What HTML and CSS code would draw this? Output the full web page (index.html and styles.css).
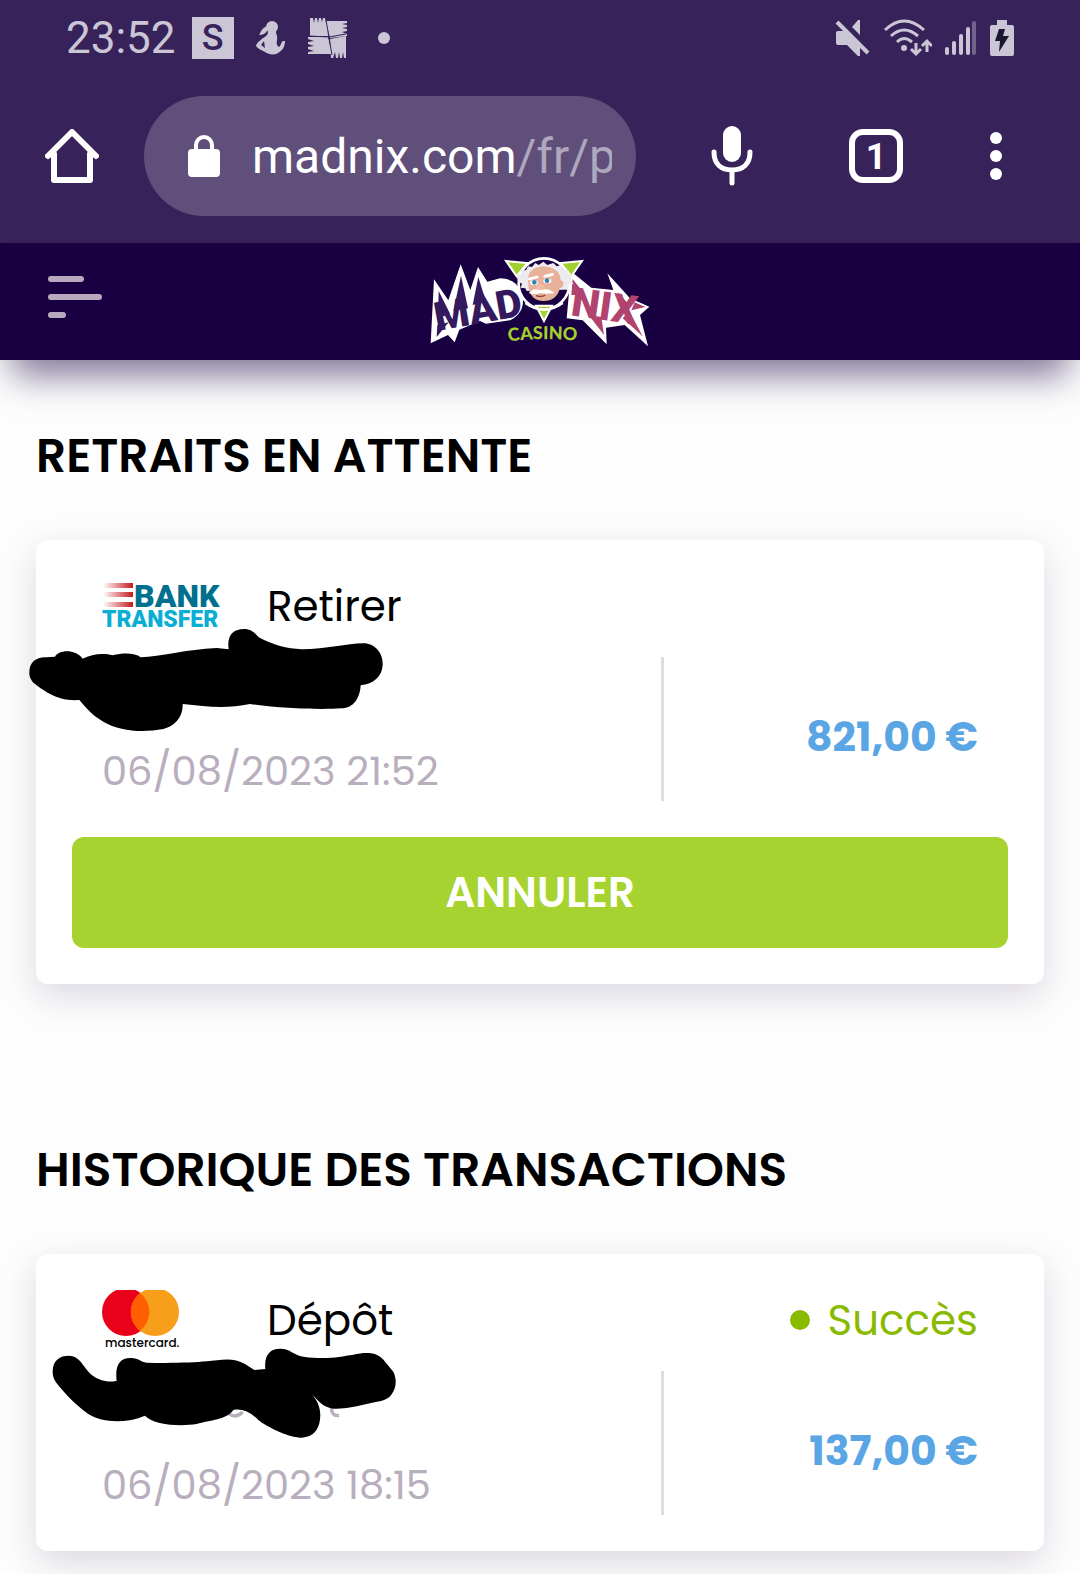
FILE: index.html
```
<!DOCTYPE html>
<html lang="fr">
<head>
    <meta charset="UTF-8">
    <meta name="viewport" content="width=device-width, initial-scale=1.0">
    <title>Madnix - Transactions</title>
    <link rel="stylesheet" href="styles.css">
</head>
<body>
    <div class="status-bar">
        <div class="status-left">
            <span class="clock">23:52</span>
            <span class="app-badge">S</span>
            <svg class="icon-figure" width="30" height="34" viewBox="0 0 30 34" fill="#cbc6d6">
                <circle cx="16" cy="6" r="6"/>
                <path d="M12 5 C6 6 5 11 3 14 C6 14 9 13 11 10 Z"/>
                <path d="M12 9 H20 C19 12 22 14 21 19 C20 22 21 25 23 26 C25 25 25 21 27 20 H29 C29 27 25 31 20 33 C16 34 12 33 9 31 C6 29 2 28 0 25 C0 22 7 17 10 15 C12 13 12 12 12 9 Z"/>
                <path d="M8 20 L5 24 L9 27 Z" fill="#38225a"/>
            </svg>
            <svg class="icon-scarf" width="40" height="40" viewBox="0 0 40 40" fill="#cbc6d6">
                <path d="M2 0 H5 L6 5 L7 0 H9 L10 5 L11 0 H13 L14 4 L15 0 H17 L18 5 L19 2 L21 18 H2 Z"/>
                <path d="M18 3 H39 V5 L34 6 L39 7 V9 L34 10 L39 11 V13 L34 14 L39 16 V18 L22 20 Z"/>
                <path d="M0 19 H20 L24 36 H0 V34 L6 33 L0 31 V29 L6 28 L0 26 V24 L6 23 L0 21 Z"/>
                <path d="M22 21 L38 18 V40 H36 L35 34 L34 40 H32 L31 34 L30 40 H28 L27 34 L25 40 H23 Z"/>
                <path d="M18 2 L24 37 M1 18 L21 19 L38 16" stroke="#38225a" fill="none"/>
            </svg>
            <svg width="12" height="12" viewBox="0 0 12 12" fill="#cbc6d6"><circle cx="6" cy="6" r="6"/></svg>
        </div>
        <div class="status-right">
            <svg width="36" height="38" viewBox="0 0 36 38" fill="#cbc6d6">
                <path d="M3 12 H9 L25 28 V37 H23 L12 26 H3 Q1 26 1 24 V14 Q1 12 3 12 Z"/>
                <path d="M17 8 L23 1 H25 V16 Z"/>
                <path d="M2 3 L33 34" stroke="#cbc6d6" stroke-width="4"/>
            </svg>
            <svg width="48" height="38" viewBox="0 0 48 38" fill="none" stroke="#cbc6d6" stroke-width="3">
                <path d="M1 11 Q20 -7 40 11"/>
                <path d="M7 17 Q20 5 34 17"/>
                <path d="M13 23 Q20 16 28 23"/>
                <circle cx="20" cy="29" r="3" fill="#cbc6d6" stroke="none"/>
                <path d="M32 24 V35 M27 30 L32 35 L37 30 M43 33 V22 M38 27 L43 22 L48 27"/>
            </svg>
            <svg width="32" height="36" viewBox="0 0 32 36" fill="#cbc6d6">
                <rect x="0" y="27" width="4" height="8" rx="2"/>
                <rect x="7" y="21" width="4" height="14" rx="2"/>
                <rect x="14" y="14" width="4" height="21" rx="2"/>
                <rect x="21" y="7" width="4" height="28" rx="2"/>
                <rect x="27" y="1" width="4" height="34" rx="2" opacity=".4"/>
            </svg>
            <svg width="24" height="36" viewBox="0 0 24 36">
                <path d="M7 0 H17 V5 H22 Q24 5 24 7 V34 Q24 36 22 36 H2 Q0 36 0 34 V7 Q0 5 2 5 H7 Z" fill="#cbc6d6"/>
                <path d="M9 9 H15 L13 16 H19 L9 32 L10 21 H5 Z" fill="#1c1730"/>
            </svg>
        </div>
    </div>

    <div class="toolbar">
        <button class="tool home" aria-label="Accueil">
            <svg width="54" height="54" viewBox="0 0 54 54" fill="none" stroke="#fff" stroke-width="6" stroke-linecap="round" stroke-linejoin="round">
                <path d="M9 25 V51 H45 V25"/>
                <path d="M3 27 L27 3 L51 27"/>
            </svg>
        </button>
        <a class="address" href="#">
            <svg class="lock" width="32" height="42" viewBox="0 0 32 42">
                <rect x="0" y="14" width="32" height="28" rx="4" fill="#fff"/>
                <path d="M8 16 V10 A8 8 0 0 1 24 10 V16" fill="none" stroke="#fff" stroke-width="4"/>
            </svg>
            <span class="url">madnix.com<span class="path">/fr/p</span></span>
        </a>
        <button class="tool" aria-label="Recherche vocale">
            <svg width="42" height="60" viewBox="0 0 42 60">
                <rect x="12" y="0" width="18" height="36" rx="9" fill="#fff"/>
                <path d="M3 26 C3 38 10 44 21 44 C32 44 39 38 39 26 M21 44 V57" fill="none" stroke="#fff" stroke-width="5" stroke-linecap="round"/>
            </svg>
        </button>
        <button class="tool" aria-label="Onglets"><span class="tab-count">1</span></button>
        <button class="tool more" aria-label="Menu">
            <svg width="12" height="48" viewBox="0 0 12 48" fill="#fff">
                <circle cx="6" cy="6" r="6"/><circle cx="6" cy="24" r="6"/><circle cx="6" cy="42" r="6"/>
            </svg>
        </button>
    </div>

    <header class="site-header">
        <button class="menu" aria-label="Menu du site">
            <svg width="54" height="42" viewBox="0 0 54 42" fill="#b8a9bf">
                <rect y="0" width="36" height="6" rx="3"/>
                <rect y="18" width="54" height="6" rx="3"/>
                <rect y="36" width="18" height="6" rx="3"/>
            </svg>
        </button>
        <a class="brand" href="#" aria-label="Madnix Casino">
            <svg width="220" height="94" viewBox="90 60 660 282">
                <!-- white plates behind the two words -->
                <path fill="#fff" d="M92 325 L102 133 L145 196 L182 88 L211 165 L234 96 L262 140 L300 130 Q350 130 366 175 Q380 230 330 256 L258 266 L240 258 L178 284 L164 322 L144 300 Z"/>
                <path fill="#fff" d="M500 250 L512 118 L524 118 L574 158 L640 165 L622 115 L690 190 L748 215 L720 240 L744 334 L674 270 L618 278 L620 328 L548 256 Z"/>
                <!-- spikes on the letters -->
                <path fill="#34195f" d="M116 168 L150 236 L114 250 Z M183 122 L204 220 L160 228 Z M235 126 L258 200 L218 210 Z M112 270 L146 262 L110 306 Z"/>
                <path fill="#b0446f" d="M518 132 L556 180 L514 180 Z M566 240 L604 246 L612 300 Z M688 228 L728 304 L668 250 Z M654 172 L690 212 L668 226 Z M694 226 L736 216 L704 202 Z"/>
                <text class="word-mad" x="110" y="288" transform="rotate(-10 110 288)">MAD</text>
                <text class="word-nix" x="510" y="241" transform="rotate(8 510 241)">NIX</text>
                <!-- emblem -->
                <circle cx="432" cy="146" r="76" fill="#180042" stroke="#fff" stroke-width="8"/>
                <path d="M318 78 L382 84 L350 124 Z M546 78 L482 84 L514 124 Z M408 212 L456 212 L432 258 Z" fill="#a4d02f" stroke="#fff" stroke-width="6"/>
                <path d="M376 204 Q432 244 488 204" fill="none" stroke="#fff" stroke-width="8"/>
                <path d="M350 122 L366 118 L362 106 L378 106 L384 94 L396 96 L406 84 L416 90 L430 80 L442 90 L460 84 L470 94 L484 90 L490 104 L506 104 L504 116 L520 122 L510 132 L520 146 L506 150 L506 164 L488 164 L380 168 L376 160 L362 158 L366 146 L354 140 Z" fill="#edeaf0"/>
                <path d="M384 134 Q384 98 430 94 Q480 98 482 136 L490 140 Q492 156 480 160 Q470 198 430 198 Q392 196 386 158 Z" fill="#e8b199"/>
                <path d="M388 132 L412 126 M434 124 L458 118" stroke="#fff" stroke-width="8" stroke-linecap="round"/>
                <ellipse cx="402" cy="143" rx="12" ry="7" fill="#fff"/>
                <ellipse cx="442" cy="138" rx="12" ry="7" fill="#fff"/>
                <circle cx="403" cy="142" r="7" fill="#347fb5"/>
                <circle cx="441" cy="137" r="7" fill="#347fb5"/>
                <ellipse cx="420" cy="155" rx="11" ry="9" fill="#f3bda3"/>
                <path d="M386 174 Q402 156 420 166 Q444 156 464 174 Q444 178 422 174 Q402 182 386 174 Z" fill="#fff"/>
                <path d="M408 182 Q424 188 436 180" stroke="#8d4a43" stroke-width="4" fill="none"/>
                <path id="arc" d="M326 320 Q432 304 570 322" fill="none"/>
                <text class="word-casino"><textPath href="#arc">CASINO</textPath></text>
            </svg>
        </a>
    </header>

    <main>
        <h2>RETRAITS EN ATTENTE</h2>
        <div class="card">
            <div class="card-top">
                <div class="method">
                    <svg width="130" height="50" viewBox="0 0 130 50">
                        <defs>
                            <linearGradient id="red"><stop offset="0" stop-color="#fff"/><stop offset="1" stop-color="#c3191f"/></linearGradient>
                        </defs>
                        <path d="M1 2 H31 V7 H1 Z M1 11 H31 V16 H1 Z M1 21 H31 V26 H1 Z" fill="url(#red)"/>
                        <text class="bank" x="32" y="26">BANK</text>
                        <text class="transfer" x="0" y="46">TRANSFER</text>
                    </svg>
                </div>
                <span class="type">Retirer</span>
            </div>
            <div class="card-row">
                <div class="date">06/08/2023 21:52</div>
                <div class="amount">821,00 €</div>
            </div>
            <button class="cancel">ANNULER</button>
            <svg class="mask mask-bank" width="360" height="107" viewBox="18 201 1080 321">
                <path d="M28 338 C28 305 50 290 80 292 L105 290 C115 270 165 265 188 296 C215 282 250 278 278 286 C310 278 345 278 362 292 C420 290 500 268 590 264 L626 268 C620 225 640 207 672 207 C695 207 705 220 716 232 C760 255 800 266 845 268 C920 268 980 250 1030 250 C1065 250 1090 280 1088 315 C1086 350 1060 372 1022 376 C1020 415 1000 445 965 445 C900 450 780 445 690 432 C620 447 560 440 488 432 C490 475 460 500 430 507 C370 518 300 515 250 485 C215 465 195 440 178 420 C110 425 70 390 40 368 C30 355 28 348 28 338 Z"/>
            </svg>
        </div>

        <h2>HISTORIQUE DES TRANSACTIONS</h2>
        <div class="card">
            <div class="card-top">
                <div class="method">
                    <svg width="80" height="60" viewBox="0 0 80 60">
                        <circle cx="24" cy="22" r="24" fill="#eb001b"/>
                        <circle cx="53" cy="22" r="24" fill="#f79e1b"/>
                        <path d="M38 3 A24 24 0 0 1 38 41 A24 24 0 0 1 38 3 Z" fill="#ff5f00"/>
                        <text class="mastercard" x="3" y="57">mastercard.</text>
                    </svg>
                </div>
                <span class="type">Dépôt</span>
                <span class="status">Succès</span>
            </div>
            <div class="card-row">
                <div class="date">06/08/2023 18:15</div>
                <div class="amount">137,00 €</div>
            </div>
            <svg class="mask mask-card" width="350" height="94" viewBox="93 261 1050 282">
                <path d="M628 462 Q648 476 668 456 M934 440 Q934 470 957 466 M872 400 L880 420" fill="none" stroke="#b8aebd" stroke-width="10"/>
                <path d="M98 335 C98 300 120 287 147 287 C180 288 185 315 215 345 C235 360 265 370 290 362 C284 315 300 292 335 294 C355 294 362 306 380 308 C450 310 520 308 560 304 C600 300 640 290 675 312 L703 330 L736 327 C732 285 750 265 782 266 C810 266 820 285 850 290 C920 300 960 290 1000 284 C1040 275 1075 275 1095 305 L1120 335 C1132 360 1128 385 1115 403 C1100 425 1080 422 1050 430 C1010 440 970 448 940 446 C905 442 895 420 875 403 C900 430 905 460 898 490 C890 520 870 533 840 533 C800 530 740 500 715 480 C690 455 665 445 640 450 C620 480 570 480 530 492 C480 500 400 495 375 467 C320 490 250 490 205 462 C160 430 130 395 110 370 C100 355 98 345 98 335 Z"/>
            </svg>
        </div>
    </main>
</body>
</html>
```
FILE: styles.css
```
* {
    box-sizing: border-box;
}
body {
    margin: 0;
    font-family: Poppins, Inter, sans-serif;
    font-size: 42px;
    background-color: #fdfdfd;
    color: #000;
}
svg {
    display: block;
    flex-shrink: 0;
}
button {
    border: 0;
    padding: 0;
    background: none;
    font-family: inherit;
    cursor: pointer;
}
a {
    text-decoration: none;
}

.status-bar {
    display: flex;
    justify-content: space-between;
    align-items: center;
    height: 75px;
    padding: 0 66px;
    background: #38225a;
    color: #cbc6d6;
    font-family: Roboto, sans-serif;
}
.status-left,
.status-right {
    display: flex;
    align-items: center;
}
.status-left {
    gap: 22px;
}
.status-right {
    gap: 13px;
}
.clock {
    font-size: 44px;
    margin-right: -6px;
}
.app-badge {
    width: 42px;
    height: 42px;
    background: #cbc6d6;
    color: #38225a;
    font-size: 36px;
    font-weight: 500;
    line-height: 42px;
    text-align: center;
}
.icon-scarf {
    margin-right: 8px;
}

.toolbar {
    display: flex;
    align-items: center;
    padding: 21px 36px 27px;
    background: #38225a;
    font-family: Roboto, sans-serif;
}
.tool {
    display: flex;
    justify-content: center;
    align-items: center;
    width: 144px;
    height: 96px;
}
.tool.home {
    width: 72px;
    margin-right: 36px;
}
.tool.more {
    width: 96px;
}
.address {
    display: flex;
    flex: 1;
    align-items: center;
    gap: 32px;
    min-width: 0;
    height: 120px;
    margin-right: 24px;
    padding: 0 24px 0 44px;
    border-radius: 60px;
    background: #604f7b;
    color: #fff;
    font-size: 48px;
}
.url {
    overflow: hidden;
    white-space: nowrap;
}
.path {
    color: #afa7bd;
}
.tab-count {
    width: 54px;
    height: 54px;
    border: 6px solid #fff;
    border-radius: 14px;
    color: #fff;
    font-family: Roboto, sans-serif;
    font-size: 36px;
    font-weight: 700;
    line-height: 44px;
    text-align: center;
}

.site-header {
    position: relative;
    display: grid;
    grid-template-columns: 1fr auto 1fr;
    align-items: center;
    height: 117px;
    padding: 0 48px;
    background: #180042;
    box-shadow: 0 27px 36px -12px rgba(24, 0, 66, 0.55);
}
.menu {
    justify-self: start;
    margin-bottom: 9px;
}
.word-mad,
.word-nix {
    font-family: Roboto, sans-serif;
    font-size: 120px;
    font-weight: 900;
    fill: #34195f;
}
.word-nix {
    fill: #b0446f;
}
.word-casino {
    font-family: Lato, sans-serif;
    font-size: 54px;
    font-weight: 900;
    fill: #a4d02f;
}

main {
    padding: 60px 36px 24px;
}
h2 {
    margin: 0 0 48px;
    font-size: 47px;
    font-weight: 600;
    line-height: 72px;
}
.card {
    position: relative;
    padding: 36px;
    border-radius: 12px;
    background: #fff;
    box-shadow: 0 12px 36px rgba(24, 0, 66, 0.15);
}
.card + h2 {
    margin-top: 150px;
}
.card-top {
    display: flex;
    align-items: center;
    height: 60px;
    margin-bottom: 21px;
    padding: 0 30px;
}
.method {
    width: 165px;
}
.bank,
.transfer {
    font-family: Roboto, sans-serif;
    font-size: 32px;
    font-weight: 900;
    fill: #00708f;
}
.transfer {
    font-size: 23px;
    fill: #0aaed2;
}
.mastercard {
    font-size: 12px;
    font-weight: 500;
}
.status {
    display: flex;
    align-items: center;
    gap: 18px;
    margin-left: auto;
    color: #8aba00;
}
.status::before {
    content: "";
    width: 20px;
    height: 20px;
    border-radius: 50%;
    background: #8aba00;
}
.card-row {
    display: grid;
    grid-template-columns: 592fr 344fr;
    height: 144px;
}
.date {
    display: flex;
    align-items: flex-end;
    padding-left: 30px;
    border-right: 3px solid #dedede;
    color: #b8aebd;
    font-size: 40px;
}
.amount {
    display: flex;
    align-items: center;
    justify-content: flex-end;
    padding: 14px 30px 0 0;
    color: #5aa5e4;
    font-size: 41px;
    font-weight: 700;
}
.cancel {
    width: 100%;
    height: 111px;
    margin-top: 36px;
    border-radius: 12px;
    background: #a7d330;
    color: #fff;
    font-size: 42px;
    font-weight: 600;
}
/* pen strokes over the account numbers */
.mask {
    position: absolute;
}
.mask-bank {
    left: -10px;
    top: 87px;
}
.mask-card {
    left: 15px;
    top: 93px;
}
```
